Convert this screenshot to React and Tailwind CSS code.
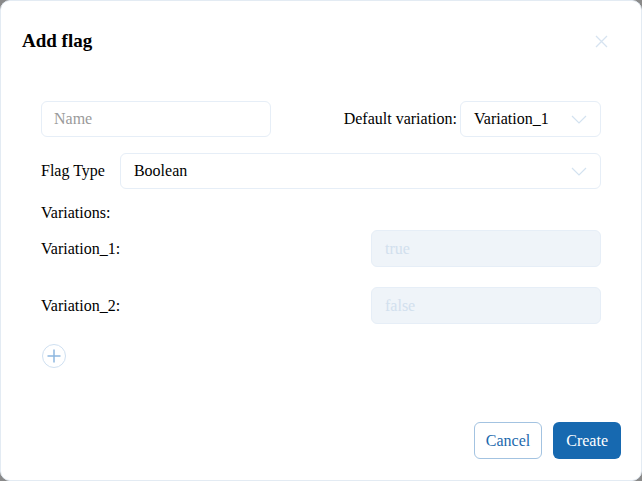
const serif = { fontFamily: '"Liberation Serif", "Times New Roman", serif' };

function Chevron() {
  return (
    <svg width="16" height="9" viewBox="0 0 16 9">
      <path d="M1 1L8 8L15 1" fill="none" stroke="#d3e2f0" strokeWidth="1.2" />
    </svg>
  );
}

function Select({ value, className }) {
  return (
    <div className={`h-9 rounded-md border border-[#e6eef7] bg-white flex items-center justify-between pl-[13px] pr-[13px] ${className}`}>
      <span className="text-[16px] text-black">{value}</span>
      <Chevron />
    </div>
  );
}

function VariationRow({ label, value }) {
  return (
    <div className="flex items-center justify-between">
      <span className="text-[16px] text-black">{label}</span>
      <div className="w-[230px] h-[37px] rounded-md border border-[#e6eef7] bg-[#eff4f9] flex items-center px-[13px]">
        <span className="text-[16px] text-[#d2e0ee]">{value}</span>
      </div>
    </div>
  );
}

export default function App() {
  return (
    <div className="w-[642px] h-[481px] bg-[#8a8a8a]" style={serif}>
      <div className="w-full h-full bg-white rounded-[10px] border border-[#e3ebf3] flex flex-col">
        {/* Header */}
        <div className="flex items-center justify-between pl-[21px] pr-[33px] pt-[28px]">
          <h2 className="text-[19px] font-bold text-black leading-6">Add flag</h2>
          <svg width="13" height="13" viewBox="0 0 13 13" className="mt-[1px]">
            <path d="M1 1L12 12M12 1L1 12" stroke="#d6e3f0" strokeWidth="1.3" />
          </svg>
        </div>

        {/* Body */}
        <div className="flex flex-col pl-[40px] pr-[40px] pt-[48px]">
          <div className="flex items-center justify-between">
            <div className="w-[230px] h-9 rounded-md border border-[#e6eef7] flex items-center px-[12px]">
              <span className="text-[16px] text-[#9a9a9a]">Name</span>
            </div>
            <div className="flex items-center">
              <span className="text-[16px] text-black mr-[3px]">Default variation:</span>
              <Select value="Variation_1" className="w-[141px]" />
            </div>
          </div>

          <div className="flex items-center gap-[15px] mt-[16px]">
            <span className="text-[16px] text-black whitespace-nowrap">Flag Type</span>
            <Select value="Boolean" className="flex-1" />
          </div>

          <div className="text-[16px] text-black mt-[14px] leading-5">Variations:</div>

          <div className="flex flex-col gap-[20px] mt-[7px]">
            <VariationRow label="Variation_1:" value="true" />
            <VariationRow label="Variation_2:" value="false" />
          </div>

          <div className="mt-[19px]">
            <svg width="26" height="26" viewBox="0 0 26 26">
              <circle cx="13" cy="13" r="11.5" fill="none" stroke="#cfe0f1" strokeWidth="1" />
              <path d="M13 6.5V19.5M6.5 13H19.5" stroke="#8db7df" strokeWidth="1.5" />
            </svg>
          </div>
        </div>

        {/* Footer */}
        <div className="mt-auto flex justify-end gap-[11px] pr-[20px] pb-[21px]">
          <button className="h-[37px] px-[11px] rounded-md border border-[#a3c3e1] bg-white text-[16px] text-[#1c69ad]">
            Cancel
          </button>
          <button className="h-[37px] px-[13px] rounded-md bg-[#1769b0] text-[16px] text-white">
            Create
          </button>
        </div>
      </div>
    </div>
  );
}
